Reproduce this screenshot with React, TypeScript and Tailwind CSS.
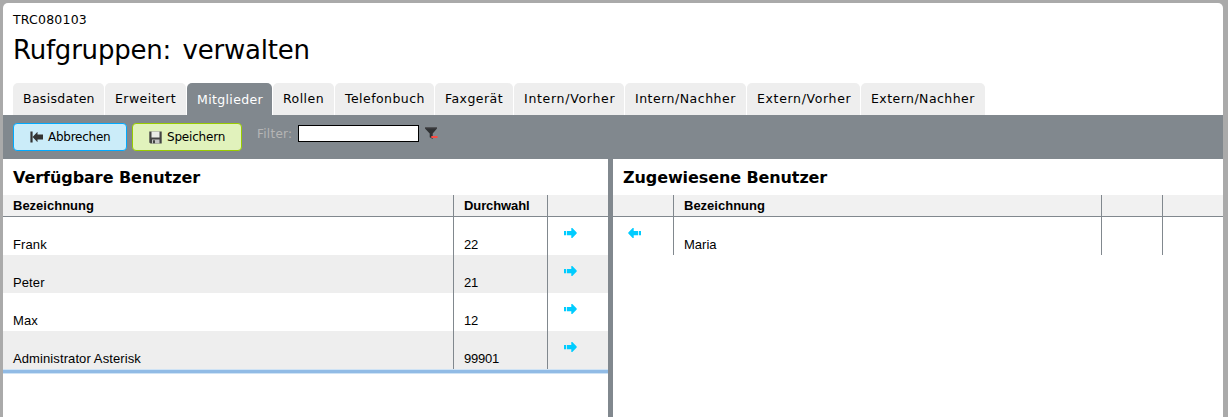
import type { ReactNode } from "react";

const tabs = [
  { label: "Basisdaten", width: "w-[91px]", spacing: "tracking-[0.3px]" },
  { label: "Erweitert", width: "w-[81px]", spacing: "tracking-[0.45px]" },
  { label: "Mitglieder", width: "w-[85px]", spacing: "tracking-[0.35px]", active: true },
  { label: "Rollen", width: "w-[61px]", spacing: "tracking-[0.45px]" },
  { label: "Telefonbuch", width: "w-[99px]", spacing: "tracking-[0.45px]" },
  { label: "Faxgerät", width: "w-[78px]", spacing: "tracking-[0.45px]" },
  { label: "Intern/Vorher", width: "w-[110px]", spacing: "tracking-[0.7px]" },
  { label: "Intern/Nachher", width: "w-[121px]", spacing: "tracking-[0.5px]" },
  { label: "Extern/Vorher", width: "w-[113px]", spacing: "tracking-[0.65px]" },
  { label: "Extern/Nachher", width: "w-[124px]", spacing: "tracking-[0.45px]" },
];

const available = [
  { name: "Frank", extension: "22" },
  { name: "Peter", extension: "21" },
  { name: "Max", extension: "12" },
  { name: "Administrator Asterisk", extension: "99901" },
];

function Arrow({ left = false }: { left?: boolean }) {
  return (
    <svg width="13" height="10" viewBox="0 0 13 10" className={left ? "-scale-x-100" : ""} fill="#00ccff">
      <path d="M0 3h2.2v4.3H0zM3 3h4.3V0h1l4.4 4.6v1L8.3 10h-1V7.3H3z" />
    </svg>
  );
}

function BackIcon() {
  return (
    <svg width="13" height="12" viewBox="0 0 13 12" fill="#333333">
      <path d="M.4 0.5h2.2v11H.4zM2.8 5.7L7.5 .8v2.7H13v5H7.5v2.7L2.8 6.3z" />
    </svg>
  );
}

function SaveIcon() {
  return (
    <svg width="13" height="13" viewBox="0 0 13 13">
      <path d="M.3.5h12.4v12H1.5L.3 11.5z" fill="#444444" />
      <path d="M2.5.5h8v6h-8z" fill="#e9ebe6" />
      <path d="M3 8.5h7.5v4H3z" fill="#c4c4c4" />
      <path d="M4 9.2h2v3H4z" fill="#444444" />
    </svg>
  );
}

function FilterIcon() {
  return (
    <svg width="13" height="12" viewBox="0 0 13 12">
      <path d="M0 0h12v1.5L7.7 6.5V12L4.7 10.2V6.5L0 1.5z" fill="#303234" />
      <path d="M0 0h12v1.3H0z" fill="#505255" />
      <path d="M6.3 9h6.2v2H6.3z" fill="#fb4b43" />
    </svg>
  );
}

function Cell({ children, className = "" }: { children?: ReactNode; className?: string }) {
  return <div className={`border-[#81888e] ${className}`}>{children}</div>;
}

export default function App() {
  return (
    <div className="h-[417px] w-[1228px] overflow-hidden bg-[#aaaaaa] pt-[3px] pr-[5px] pl-[3px] font-['DejaVu_Sans',sans-serif] text-black">
      <div className="flex h-[414px] flex-col overflow-hidden rounded-t-[5px] bg-white">
        <header className="h-20 px-2.5 pt-2">
          <div className="text-[12.5px] leading-[18px] tracking-[0.2px]">TRC080103</div>
          <h1 className="pt-[3px] text-[26px] leading-9 tracking-[-0.22px] whitespace-nowrap [word-spacing:3.5px]">
            Rufgruppen: verwalten
          </h1>
        </header>

        <nav className="flex h-8 gap-px pl-2.5 text-[12.5px]">
          {tabs.map((tab) => (
            <div
              key={tab.label}
              className={`${tab.width} ${tab.spacing} shrink-0 rounded-t-[5px] pl-2.5 leading-8 whitespace-nowrap ${
                tab.active ? "bg-[#81888e] pt-px text-white" : "bg-[#eeeeee]"
              }`}
            >
              {tab.label}
            </div>
          ))}
        </nav>

        <div className="flex h-11 shrink-0 items-start bg-[#81888e] pt-2 pl-2.5">
          <button className="flex h-7 w-[114px] items-center rounded-[4px] border border-[#00aaff] bg-[#cbecf9] pl-4 text-[12px] tracking-[-0.25px]">
            <BackIcon />
            <span className="ml-[5px]">Abbrechen</span>
          </button>
          <button className="ml-[5px] flex h-7 w-[110px] items-center rounded-[4px] border border-[#99cc00] bg-[#e1f2bc] pl-4 text-[12px] tracking-[-0.2px]">
            <SaveIcon />
            <span className="ml-[5px]">Speichern</span>
          </button>
          <label className="ml-[15px] w-[41px] pt-[2px] text-[12px] leading-[18px] tracking-[0.25px] whitespace-nowrap text-[#b5b5b5]">
            Filter:
          </label>
          <input className="mt-[2px] h-[17px] w-[121px] border border-black bg-white outline-none" />
          <div className="mt-1 ml-[6px]">
            <FilterIcon />
          </div>
        </div>

        <main className="flex grow">
          <section className="w-[605px]">
            <h2 className="h-9 pl-2.5 text-[16px] leading-[37px] font-bold tracking-[-0.06px]">Verfügbare Benutzer</h2>
            <div className="grid h-[22px] grid-cols-[451px_94px_60px] border-b border-[#81888e] bg-[#f1f1f1] font-['Liberation_Sans',Arial,sans-serif] text-[13px] leading-[21px] font-bold">
              <Cell className="border-r pl-2.5">Bezeichnung</Cell>
              <Cell className="border-r pl-2.5 tracking-[-0.1px]">Durchwahl</Cell>
              <Cell />
            </div>
            {available.map((user) => (
              <div
                key={user.name}
                className="grid h-[38px] grid-cols-[451px_94px_60px] font-['Liberation_Sans',Arial,sans-serif] text-[13px] leading-[18px] odd:bg-white even:bg-[#eeeeee]"
              >
                <Cell className="border-r pt-[19px] pl-2.5 tracking-[0.1px]">{user.name}</Cell>
                <Cell className="border-r pt-[19px] pl-2.5 tracking-[-0.25px]">{user.extension}</Cell>
                <Cell className="pt-[11px] pl-4">
                  <Arrow />
                </Cell>
              </div>
            ))}
            <div className="h-[5px] border-t border-b border-[#cfe3f5] bg-[#91bbe5]" />
          </section>

          <div className="w-[5px] bg-[#81888e]" />

          <section className="w-[610px]">
            <h2 className="h-9 pl-2.5 text-[16px] leading-[37px] font-bold tracking-[-0.1px]">Zugewiesene Benutzer</h2>
            <div className="grid h-[22px] grid-cols-[61px_428px_61px_60px] border-b border-[#81888e] bg-[#f1f1f1] font-['Liberation_Sans',Arial,sans-serif] text-[13px] leading-[21px] font-bold">
              <Cell className="border-r" />
              <Cell className="border-r pl-2.5">Bezeichnung</Cell>
              <Cell className="border-r" />
              <Cell />
            </div>
            <div className="grid h-[38px] grid-cols-[61px_428px_61px_60px] font-['Liberation_Sans',Arial,sans-serif] text-[13px] leading-[18px]">
              <Cell className="border-r pt-[11px] pl-[15px]">
                <Arrow left />
              </Cell>
              <Cell className="border-r pt-[19px] pl-2.5">Maria</Cell>
              <Cell className="border-r" />
              <Cell />
            </div>
          </section>
        </main>
      </div>
    </div>
  );
}
